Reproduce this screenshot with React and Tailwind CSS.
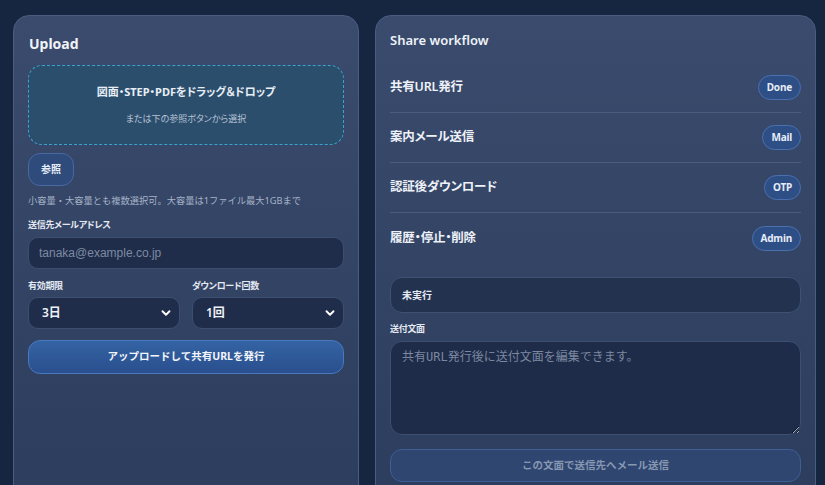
import React from "react";
import { ChevronDown } from "lucide-react";

const font = { fontFamily: '"Noto Sans", "Noto Sans CJK JP", sans-serif' };
const palt = { fontFeatureSettings: '"palt"' };

function Badge({ children }) {
  return (
    <span className="inline-flex h-[25px] items-center rounded-full border border-[#4a70b0] bg-[#2e4e86] px-[8px] text-[10px] font-bold tracking-[-0.2px] text-[#e6ecf7]">
      {children}
    </span>
  );
}

function Row({ label, badge, last }) {
  return (
    <div className={"flex h-[50px] items-center justify-between " + (last ? "" : "border-b border-[#4a5d7f]")}>
      <span style={palt} className="text-[12.5px] font-semibold tracking-[-0.2px] text-[#eef2f8]">{label}</span>
      <Badge>{badge}</Badge>
    </div>
  );
}

function Label({ children }) {
  return (
    <div style={palt} className="text-[9px] font-bold leading-[14px] tracking-[-0.3px] text-[#e4e9f2]">{children}</div>
  );
}

function Select({ value }) {
  return (
    <div className="relative">
      <select className="h-[32px] w-full appearance-none rounded-[10px] border border-[#3c4f70] bg-[#1f2d4b] pl-[13px] text-[12px] font-semibold text-[#eef2f8] outline-none">
        <option>{value}</option>
      </select>
      <ChevronDown size={14} strokeWidth={3.2} className="pointer-events-none absolute right-[7px] top-[9px] text-white" />
    </div>
  );
}

export default function App() {
  return (
    <div style={font} className="min-h-[485px] h-[485px] overflow-hidden bg-[#172640] pl-[13px] pt-[15px]">
      <div className="grid grid-cols-[346px_441px] gap-[16px]">
        {/* Upload card */}
        <div className="h-[520px] rounded-t-[16px] border border-[#4a5d80] bg-gradient-to-b from-[#3a4b6d] to-[#2b3c5c] px-[14px] pt-[18px]">
          <div className="h-5 pl-[1px] text-[14px] font-bold leading-5 text-[#f1f4f9]">Upload</div>
          <div className="mt-[11px] flex h-[80px] flex-col items-center justify-center gap-[12px] rounded-[14px] border border-dashed border-[#3aa3cc] bg-[#2c4e6d]">
            <div style={palt} className="text-[11px] font-bold leading-4 text-[#e8eef6]">図面・STEP・PDFをドラッグ＆ドロップ</div>
            <div style={palt} className="text-[9px] leading-[14px] text-[#b5c2d4]">または下の参照ボタンから選択</div>
          </div>
          <button className="mt-[8px] flex h-[33px] w-[46px] items-center justify-center rounded-[12px] border border-[#4a69a0] bg-[#2f4b7c] text-[10px] font-bold text-[#e8eef7]">
            参照
          </button>
          <div className="mt-[8px] text-[9.25px] leading-[14px] text-[#a6b2c6]">小容量・大容量とも複数選択可。大容量は1ファイル最大1GBまで</div>
          <div className="mt-[10px]"><Label>送信先メールアドレス</Label></div>
          <input
            placeholder="tanaka@example.co.jp"
            style={{ fontFamily: '"Liberation Sans", Arial, sans-serif' }}
            className="mt-[5px] h-[32px] w-full rounded-[10px] border border-[#3c4f70] bg-[#1f2d4b] pl-[10px] text-[12px] text-white outline-none placeholder:text-[#7d8aa1]"
          />
          <div className="mt-[10px] grid grid-cols-2 gap-[12px]">
            <div>
              <Label>有効期限</Label>
              <div className="mt-[4px]"><Select value="3日" /></div>
            </div>
            <div>
              <Label>ダウンロード回数</Label>
              <div className="mt-[4px]"><Select value="1回" /></div>
            </div>
          </div>
          <button className="mt-[11px] flex h-[34px] w-full items-center justify-center rounded-[12px] border border-[#4a78bd] bg-gradient-to-b from-[#3463a3] to-[#2a4f8e] text-[10.5px] font-bold text-[#f2f5fa]">
            アップロードして共有URLを発行
          </button>
        </div>

        {/* Share workflow card */}
        <div className="h-[520px] rounded-t-[16px] border border-[#4a5d80] bg-gradient-to-b from-[#3a4b6d] to-[#2b3c5c] px-[14px] pt-[16px]">
          <div className="h-4 text-[13px] font-semibold leading-4 text-[#eef2f8]">Share workflow</div>
          <div className="mt-[15px]">
            <Row label="共有URL発行" badge="Done" />
            <Row label="案内メール送信" badge="Mail" />
            <Row label="認証後ダウンロード" badge="OTP" />
            <Row label="履歴・停止・削除" badge="Admin" last />
          </div>
          <div className="mt-[14px] flex h-[36px] items-center rounded-[12px] border border-[#3d5275] bg-[#23324f] pl-[11px] text-[10px] font-semibold text-[#e6ebf3]">
            未実行
          </div>
          <div className="mt-[9px]"><Label>送付文面</Label></div>
          <textarea
            placeholder="共有URL発行後に送付文面を編集できます。"
            style={{ fontFamily: '"DejaVu Sans Mono", "Noto Sans CJK JP", monospace' }}
            className="mt-[5px] block h-[94px] w-full rounded-[12px] border border-[#3c4f70] bg-[#1e2c4a] px-[11px] pt-[6px] text-[12px] text-white outline-none placeholder:text-[#7b889f]"
          />
          <button className="mt-[14px] flex h-[33px] w-full items-center justify-center rounded-[12px] border border-[#3d5f95] bg-[#2f4670] text-[10.5px] font-bold text-[#8797b2]">
            この文面で送信先へメール送信
          </button>
        </div>
      </div>
    </div>
  );
}
